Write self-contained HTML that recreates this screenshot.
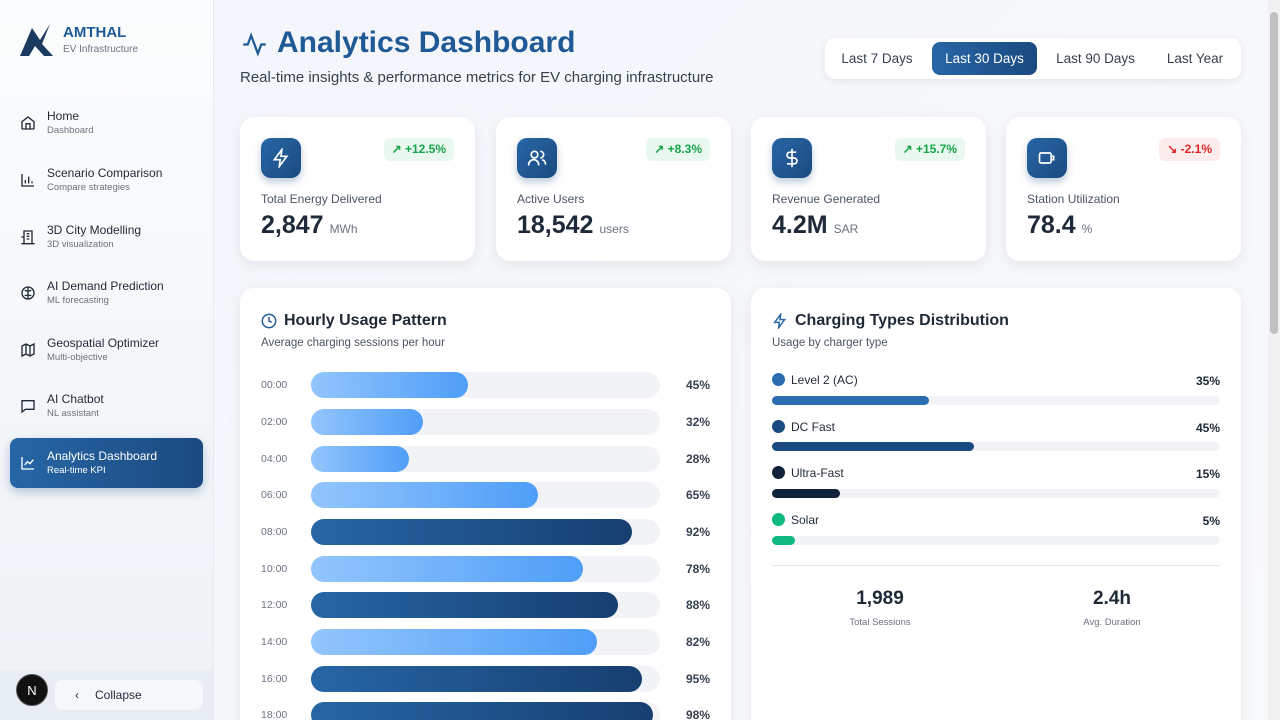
<!DOCTYPE html>
<html><head><meta charset="utf-8"><style>
*{box-sizing:border-box;margin:0;padding:0}
html,body{width:1280px;height:720px;overflow:hidden}
body{font-family:"Liberation Sans",sans-serif;background:#f6f8fb;color:#1f2937}
#wrap{position:relative;width:1280px;height:720px;overflow:hidden}
.side{position:absolute;left:0;top:0;width:214px;height:720px;background:linear-gradient(180deg,#fbfcfd,#eef2f6);border-right:1px solid #e5e9ef}
.logo{position:absolute;left:20px;top:22px}
.brand{position:absolute;left:63px;top:24px;font-weight:bold;font-size:15px;color:#1e5a95}
.brand2{position:absolute;left:63px;top:44px;font-size:10px;color:#6b7280}
.nav{position:absolute;left:10px;width:193px;height:50px;border-radius:8px}
.nav svg{position:absolute;left:10px;top:17px}
.nav .t{position:absolute;left:37px;top:11px;font-size:12px;color:#1f2937}
.nav .s{position:absolute;left:37px;top:27px;font-size:9.5px;color:#6b7280}
.nav.act{background:linear-gradient(90deg,#2766a6,#1b4a80);box-shadow:0 4px 10px rgba(30,80,140,.3)}
.nav.act .t,.nav.act .s{color:#fff}
.bottom{position:absolute;left:0;top:670px;width:214px;height:50px;background:#e8edf3}
.coll{position:absolute;left:55px;top:680px;width:148px;height:30px;background:#f6f8fb;border-radius:8px;font-size:12px;color:#1f2937;line-height:30px;padding-left:40px}
.nbtn{position:absolute;left:16px;top:674px;width:32px;height:32px;border-radius:50%;background:#111;color:#fff;font-size:13px;text-align:center;line-height:32px;border:1.5px solid #555}
.main{position:absolute;left:215px;top:0;width:1053px;height:720px;background:linear-gradient(135deg,#f3f6fb,#f8f9fb)}
h1{position:absolute;left:277px;top:26px;font-size:30px;color:#1f5a96;font-weight:bold}
.sub{position:absolute;left:240px;top:69px;font-size:15px;color:#374151}
.tabs{position:absolute;left:825px;top:38px;width:416px;height:41px;background:#fff;border-radius:10px;box-shadow:0 2px 8px rgba(0,0,0,.08)}
.tab{position:absolute;top:4px;height:33px;line-height:33px;font-size:13.5px;color:#374151;text-align:center}
.tab.on{background:linear-gradient(90deg,#2766a6,#1b4a80);color:#fff;border-radius:8px}
.card{position:absolute;background:#fff;border-radius:14px;box-shadow:0 4px 14px rgba(0,0,0,.08)}
.ic{position:absolute;left:21px;top:21px;width:40px;height:40px;border-radius:10px;background:linear-gradient(135deg,#2766a6,#1b4a80);box-shadow:0 4px 8px rgba(30,80,140,.3)}
.ic svg{position:absolute;left:10px;top:10px}
.badge{position:absolute;top:21px;right:21px;height:23px;line-height:23px;padding:0 8px;border-radius:6px;font-size:12px;font-weight:bold;color:#16a34a;background:#e9f9ef}
.badge.neg{color:#dc2626;background:#fdecec}
.kl{position:absolute;left:21px;top:75px;font-size:12px;color:#4b5563}
.kv{position:absolute;left:21px;top:94px;font-size:25px;font-weight:bold;color:#1f2937}
.kv span{font-size:12px;font-weight:normal;color:#6b7280;margin-left:6px}
.ph{position:absolute;left:21px;top:24px;font-size:16px;font-weight:bold;color:#1f2937}
.ps{position:absolute;left:21px;top:49px;font-size:11.5px;color:#4b5563}
.row{position:absolute;left:0;width:490px;height:26px}
.row .h{position:absolute;left:21px;top:7px;font-size:10.5px;color:#6b7280}
.row .tr{position:absolute;left:71px;top:0;width:349px;height:26px;border-radius:13px;background:#f1f3f6}
.row .b{position:absolute;left:0;top:0;height:26px;border-radius:13px;background:linear-gradient(90deg,#93c5fd,#4f9ef7)}
.row .b.d{background:linear-gradient(90deg,#2766a6,#173f70)}
.row .p{position:absolute;right:20px;top:6px;font-size:12px;font-weight:bold;color:#374151}
.ct{position:absolute;left:21px;font-size:12px;color:#1f2937}
.ct i{display:inline-block;width:13px;height:13px;border-radius:50%;vertical-align:-2px;margin-right:6px}
.cp{position:absolute;right:21px;font-size:12px;font-weight:bold;color:#1f2937}
.ctr{position:absolute;left:21px;width:448px;height:9px;border-radius:5px;background:#f1f3f6}
.ctr div{height:9px;border-radius:5px}
.scroll{position:absolute;left:1268px;top:0;width:12px;height:720px;background:#f1f1f1}
.scroll div{position:absolute;left:2px;top:12px;width:8px;height:322px;border-radius:4px;background:#c1c1c1}
</style></head><body><div id="wrap">
<div class="side">
<svg class="logo" width="34" height="34" viewBox="0 0 34 34"><path d="M0 34 L12 6 L20 18 L30 2 L22 22 L33 34 L24 34 L15 24 L9 34Z" fill="#1b3a5f"/></svg>
<div class="brand">AMTHAL</div><div class="brand2">EV Infrastructure</div>
<div class="nav" style="top:98px"><svg width="16" height="16" viewBox="0 0 24 24" fill="none" stroke="#1f2937" stroke-width="2"><path d="M3 10l9-7 9 7v10a1 1 0 0 1-1 1H4a1 1 0 0 1-1-1z"/><path d="M9 21v-8h6v8"/></svg><div class="t">Home</div><div class="s">Dashboard</div></div>
<div class="nav" style="top:155px"><svg width="16" height="16" viewBox="0 0 24 24" fill="none" stroke="#1f2937" stroke-width="2"><path d="M3 3v18h18M8 17v-5M13 17V7M18 17v-3"/></svg><div class="t">Scenario Comparison</div><div class="s">Compare strategies</div></div>
<div class="nav" style="top:212px"><svg width="16" height="16" viewBox="0 0 24 24" fill="none" stroke="#1f2937" stroke-width="2"><path d="M6 22V3h12v19M2 22h20M10 7h4M10 11h4M10 15h4M2 12h4v10"/></svg><div class="t">3D City Modelling</div><div class="s">3D visualization</div></div>
<div class="nav" style="top:268px"><svg width="16" height="16" viewBox="0 0 24 24" fill="none" stroke="#1f2937" stroke-width="2"><circle cx="12" cy="12" r="9"/><path d="M12 3v18M7 8c3 1 7 1 10 0M7 16c3-1 7-1 10 0"/></svg><div class="t">AI Demand Prediction</div><div class="s">ML forecasting</div></div>
<div class="nav" style="top:325px"><svg width="16" height="16" viewBox="0 0 24 24" fill="none" stroke="#1f2937" stroke-width="2"><path d="M3 6l6-3 6 3 6-3v15l-6 3-6-3-6 3zM9 3v15M15 6v15"/></svg><div class="t">Geospatial Optimizer</div><div class="s">Multi-objective</div></div>
<div class="nav" style="top:381px"><svg width="16" height="16" viewBox="0 0 24 24" fill="none" stroke="#1f2937" stroke-width="2"><path d="M3 4h18v13H8l-5 4z"/></svg><div class="t">AI Chatbot</div><div class="s">NL assistant</div></div>
<div class="nav act" style="top:438px"><svg width="16" height="16" viewBox="0 0 24 24" fill="none" stroke="#fff" stroke-width="2"><path d="M3 3v18h18M7 15l4-5 4 3 5-6"/></svg><div class="t">Analytics Dashboard</div><div class="s">Real-time KPI</div></div>
<div class="bottom"></div>
<div class="coll"><span style="position:absolute;left:20px;top:0">‹</span>Collapse</div>
<div class="nbtn">N</div>
</div>
<div class="main"></div>
<svg style="position:absolute;left:241px;top:31px" width="27" height="27" viewBox="0 0 24 24" fill="none" stroke="#1f5a96" stroke-width="2"><path d="M2 12h4l3-8 6 16 3-8h4"/></svg>
<h1>Analytics Dashboard</h1>
<div class="sub">Real-time insights &amp; performance metrics for EV charging infrastructure</div>
<div class="tabs">
<div class="tab" style="left:8px;width:88px">Last 7 Days</div>
<div class="tab on" style="left:107px;width:105px">Last 30 Days</div>
<div class="tab" style="left:222px;width:97px">Last 90 Days</div>
<div class="tab" style="left:330px;width:80px">Last Year</div>
</div>

<div class="card" style="left:240px;top:117px;width:235px;height:144px"><div class="ic"><svg width="20" height="20" viewBox="0 0 24 24" fill="none" stroke="#fff" stroke-width="2"><path d="M13 2L4 14h7l-1 8 9-12h-7z"/></svg></div><div class="badge">↗ +12.5%</div><div class="kl">Total Energy Delivered</div><div class="kv">2,847<span>MWh</span></div></div>
<div class="card" style="left:496px;top:117px;width:235px;height:144px"><div class="ic"><svg width="20" height="20" viewBox="0 0 24 24" fill="none" stroke="#fff" stroke-width="2"><circle cx="9" cy="8" r="4"/><path d="M2 21v-1a6 6 0 0 1 12 0v1M16 4a4 4 0 0 1 0 8M18 14a5 5 0 0 1 4 6"/></svg></div><div class="badge">↗ +8.3%</div><div class="kl">Active Users</div><div class="kv">18,542<span>users</span></div></div>
<div class="card" style="left:751px;top:117px;width:235px;height:144px"><div class="ic"><svg width="20" height="20" viewBox="0 0 24 24" fill="none" stroke="#fff" stroke-width="2"><path d="M12 1v22M17 5H9.5a3.5 3.5 0 0 0 0 7h5a3.5 3.5 0 0 1 0 7H6"/></svg></div><div class="badge">↗ +15.7%</div><div class="kl">Revenue Generated</div><div class="kv">4.2M<span>SAR</span></div></div>
<div class="card" style="left:1006px;top:117px;width:235px;height:144px"><div class="ic"><svg width="20" height="20" viewBox="0 0 24 24" fill="none" stroke="#fff" stroke-width="2"><rect x="3" y="6" width="14" height="12" rx="2"/><path d="M17 10h3v4h-3"/></svg></div><div class="badge neg">↘ -2.1%</div><div class="kl">Station Utilization</div><div class="kv">78.4<span>%</span></div></div>

<div class="card" style="left:240px;top:288px;width:491px;height:460px">
<svg style="position:absolute;left:21px;top:25px" width="16" height="16" viewBox="0 0 24 24" fill="none" stroke="#1f5a96" stroke-width="2.2"><circle cx="12" cy="12" r="10"/><path d="M12 6v6l4 2"/></svg>
<div class="ph" style="left:44px">Hourly Usage Pattern</div><div class="ps">Average charging sessions per hour</div>
<div class="row" style="top:84px"><div class="h">00:00</div><div class="tr"><div class="b" style="width:157px"></div></div><div class="p">45%</div></div>
<div class="row" style="top:121px"><div class="h">02:00</div><div class="tr"><div class="b" style="width:112px"></div></div><div class="p">32%</div></div>
<div class="row" style="top:158px"><div class="h">04:00</div><div class="tr"><div class="b" style="width:98px"></div></div><div class="p">28%</div></div>
<div class="row" style="top:194px"><div class="h">06:00</div><div class="tr"><div class="b" style="width:227px"></div></div><div class="p">65%</div></div>
<div class="row" style="top:231px"><div class="h">08:00</div><div class="tr"><div class="b d" style="width:321px"></div></div><div class="p">92%</div></div>
<div class="row" style="top:268px"><div class="h">10:00</div><div class="tr"><div class="b" style="width:272px"></div></div><div class="p">78%</div></div>
<div class="row" style="top:304px"><div class="h">12:00</div><div class="tr"><div class="b d" style="width:307px"></div></div><div class="p">88%</div></div>
<div class="row" style="top:341px"><div class="h">14:00</div><div class="tr"><div class="b" style="width:286px"></div></div><div class="p">82%</div></div>
<div class="row" style="top:378px"><div class="h">16:00</div><div class="tr"><div class="b d" style="width:331px"></div></div><div class="p">95%</div></div>
<div class="row" style="top:414px"><div class="h">18:00</div><div class="tr"><div class="b d" style="width:342px"></div></div><div class="p">98%</div></div>
</div>

<div class="card" style="left:751px;top:288px;width:490px;height:460px">
<svg style="position:absolute;left:21px;top:25px" width="16" height="16" viewBox="0 0 24 24" fill="none" stroke="#2766a6" stroke-width="2.2"><path d="M13 2L4 14h7l-1 8 9-12h-7z"/></svg>
<div class="ph" style="left:44px">Charging Types Distribution</div><div class="ps">Usage by charger type</div>
<div class="ct" style="top:85px"><i style="background:#2a6db0"></i>Level 2 (AC)</div><div class="cp" style="top:86px">35%</div><div class="ctr" style="top:108px"><div style="width:157px;background:#2a6db0"></div></div>
<div class="ct" style="top:132px"><i style="background:#1b4a80"></i>DC Fast</div><div class="cp" style="top:133px">45%</div><div class="ctr" style="top:154px"><div style="width:202px;background:#1b4a80"></div></div>
<div class="ct" style="top:178px"><i style="background:#10213a"></i>Ultra-Fast</div><div class="cp" style="top:179px">15%</div><div class="ctr" style="top:201px"><div style="width:68px;background:#10213a"></div></div>
<div class="ct" style="top:225px"><i style="background:#10b981"></i>Solar</div><div class="cp" style="top:226px">5%</div><div class="ctr" style="top:248px"><div style="width:23px;background:#10b981"></div></div>
<div style="position:absolute;left:21px;top:277px;width:448px;height:1px;background:#e5e7eb"></div>
<div style="position:absolute;left:0;width:258px;top:300px;text-align:center;font-size:19px;font-weight:bold">1,989</div>
<div style="position:absolute;left:0;width:258px;top:329px;text-align:center;font-size:9.5px;color:#6b7280">Total Sessions</div>
<div style="position:absolute;left:232px;width:258px;top:300px;text-align:center;font-size:19px;font-weight:bold">2.4h</div>
<div style="position:absolute;left:232px;width:258px;top:329px;text-align:center;font-size:9.5px;color:#6b7280">Avg. Duration</div>
</div>
<div class="scroll"><div></div></div>
</div></body></html>
